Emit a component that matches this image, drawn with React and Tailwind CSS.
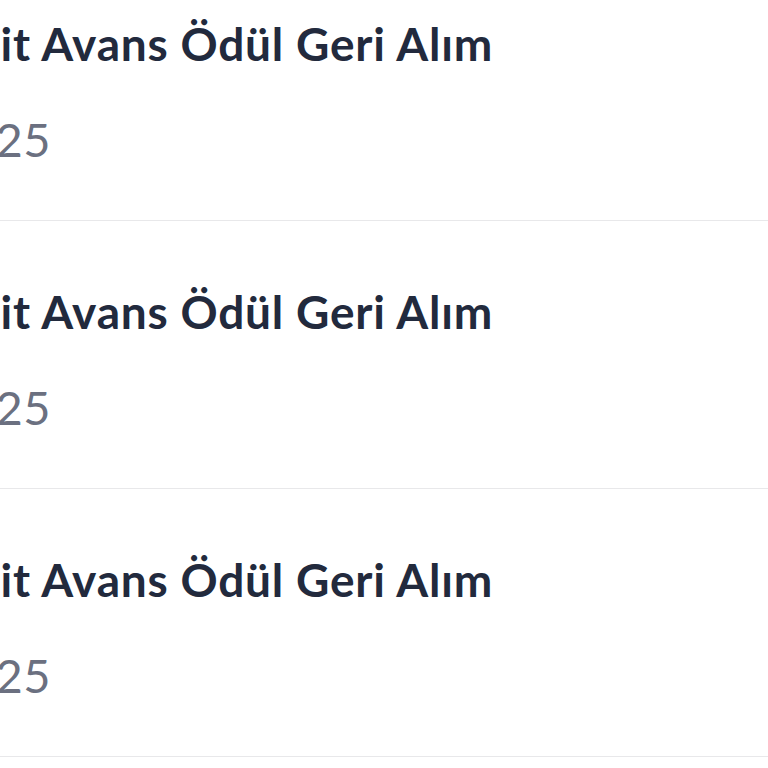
import React from "react";

const rows = [
  { title: "Nakit Avans Ödül Geri Alım", date: "15.03.2025" },
  { title: "Nakit Avans Ödül Geri Alım", date: "15.02.2025" },
  { title: "Nakit Avans Ödül Geri Alım", date: "15.01.2025" },
];

export default function App() {
  return (
    <div
      className="w-[768px] h-[768px] overflow-hidden bg-white"
      style={{ fontFamily: "Lato, 'Noto Sans', sans-serif" }}
    >
      <div className="mt-[-47px] flex flex-col">
        {rows.map((r, i) => (
          <div
            key={i}
            className="h-[268px] border-b border-[#e8e8ea] flex flex-col pt-[63px]"
          >
            <div className="w-[493px] flex justify-end whitespace-nowrap">
              <span className="text-[46px] leading-[56px] font-bold tracking-[0.8px] text-[#222a3d]">
                {r.title}
              </span>
            </div>
            <div className="mt-[39px] w-[51px] flex justify-end whitespace-nowrap">
              <span className="text-[47px] leading-[56px] font-normal tracking-[0.5px] text-[#6b7080]">
                {r.date}
              </span>
            </div>
          </div>
        ))}
      </div>
    </div>
  );
}
